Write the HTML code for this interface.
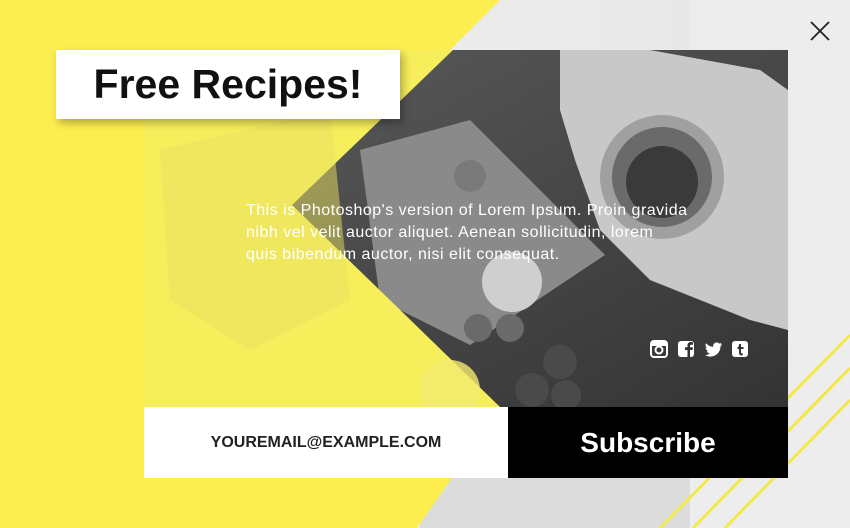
<!DOCTYPE html>
<html><head><meta charset="utf-8"><style>
html,body{margin:0;padding:0}
body{width:850px;height:528px;position:relative;overflow:hidden;font-family:"Liberation Sans",sans-serif;background:linear-gradient(90deg,#f2f2f2,#e6e6e6)}
.abs{position:absolute}
</style></head><body>
<svg class="abs" style="left:0;top:0" width="850" height="528">
<rect x="690" y="0" width="160" height="528" fill="#ededed"/>
<rect x="420" y="478" width="270" height="50" fill="#dcdcdc"/>
<polygon points="0,0 500,0 450,50 452,478 417,528 0,528" fill="#fdee4f"/>
<g stroke="#f3e84a" stroke-width="3">
<line x1="850" y1="335" x2="660" y2="528"/>
<line x1="850" y1="368" x2="693" y2="528"/>
<line x1="850" y1="400" x2="725" y2="528"/>
</g>
<defs><clipPath id="c"><rect x="144" y="50" width="644" height="357"/></clipPath>
<linearGradient id="w" x1="0" y1="0" x2="1" y2="1"><stop offset="0" stop-color="#5e5e5e"/><stop offset="1" stop-color="#333"/></linearGradient></defs>
<g clip-path="url(#c)">
<rect x="144" y="50" width="644" height="357" fill="url(#w)"/>
<polygon points="560,50 650,50 760,70 788,90 788,330 750,320 700,300 650,280 600,230 575,160 560,110" fill="#c8c8c8"/>
<circle cx="662" cy="177" r="62" fill="#a0a0a0"/>
<circle cx="662" cy="177" r="50" fill="#6a6a6a"/>
<circle cx="662" cy="182" r="36" fill="#3a3a3a"/>
<polygon points="360,150 470,120 605,255 470,345 380,300" fill="#8a8a8a"/>
<circle cx="512" cy="282" r="30" fill="#cfcfcf"/>
<circle cx="470" cy="176" r="16" fill="#7a7a7a"/>
<circle cx="478" cy="328" r="14" fill="#6a6a6a"/>
<circle cx="510" cy="328" r="14" fill="#6a6a6a"/>
<circle cx="560" cy="362" r="17" fill="#4a4a4a"/>
<circle cx="532" cy="390" r="17" fill="#4a4a4a"/>
<circle cx="566" cy="395" r="15" fill="#4a4a4a"/>
<polygon points="144,50 453,50 292,205 500,407 144,407" fill="#f6ee5a"/>
<polygon points="160,150 330,110 350,300 250,350 170,300" fill="#e8e060" opacity=".5"/>
<circle cx="450" cy="390" r="30" fill="#f2ea70" opacity=".8"/>
</g>
</svg>
<div class="abs" style="left:56px;top:50px;width:344px;height:69px;background:#fff;box-shadow:3px 4px 8px rgba(0,0,0,.3);text-align:center;line-height:69px;font-size:41px;font-weight:bold;color:#111">Free Recipes!</div>
<div class="abs" style="left:246px;top:200px;white-space:nowrap;font-size:16px;letter-spacing:.5px;line-height:22px;color:#fff">This is Photoshop's version of Lorem Ipsum. Proin gravida<br>nibh vel velit auctor aliquet. Aenean sollicitudin, lorem<br>quis bibendum auctor, nisi elit consequat.</div>
<svg class="abs" style="left:650px;top:340px" width="100" height="18">
<g fill="#fff">
<rect x="1" y="1" width="16" height="16" rx="3" fill="none" stroke="#fff" stroke-width="2"/>
<rect x="1" y="1" width="16" height="5" fill="#fff"/>
<circle cx="9" cy="10" r="3.5" fill="none" stroke="#fff" stroke-width="2"/>
<rect x="28" y="1" width="16" height="16" rx="3"/>
<path d="M40 17V10h2.5l.4-2.7H40V6c0-.8.3-1.3 1.4-1.3h1.5V2.3C42.5 2.2 41.7 2 40.8 2c-2 0-3.3 1.2-3.3 3.4v1.9H35V10h2.5v7z" fill="#333"/>
<path d="M72 4c-.6.3-1.3.5-2 .6.7-.4 1.3-1.1 1.5-1.9-.7.4-1.4.7-2.2.9a3.5 3.5 0 0 0-6 3.2c-2.9-.1-5.5-1.5-7.2-3.6-1 1.6-.5 3.7 1.1 4.7-.6 0-1.1-.2-1.6-.4 0 1.7 1.2 3.2 2.8 3.5-.5.1-1.1.2-1.6.1.5 1.4 1.8 2.4 3.3 2.4A7 7 0 0 1 55 15c1.6 1 3.4 1.6 5.4 1.6 6.6 0 10.2-5.5 10.1-10.3.6-.5 1.2-1.1 1.5-2.3z"/>
<rect x="82" y="1" width="16" height="16" rx="3"/>
<path d="M89 4h2v3h2.5v2H91v3.5c0 .8.5 1 1.8.8v2c-2.6.5-3.8-.4-3.8-2.6V9h-1.5V7.3C88.5 7 89 6 89 4z" fill="#333"/>
</g></svg>
<div class="abs" style="left:144px;top:407px;width:364px;height:71px;background:#fff;text-align:center;line-height:71px;font-size:16px;font-weight:bold;color:#222">YOUREMAIL@EXAMPLE.COM</div>
<div class="abs" style="left:508px;top:407px;width:280px;height:71px;background:#000;text-align:center;line-height:71px;font-size:28px;font-weight:bold;color:#fff">Subscribe</div>
<svg class="abs" style="left:810px;top:21px" width="20" height="20"><path d="M1 1L19 19M19 1L1 19" stroke="#222" stroke-width="1.8"/></svg>
</body></html>
